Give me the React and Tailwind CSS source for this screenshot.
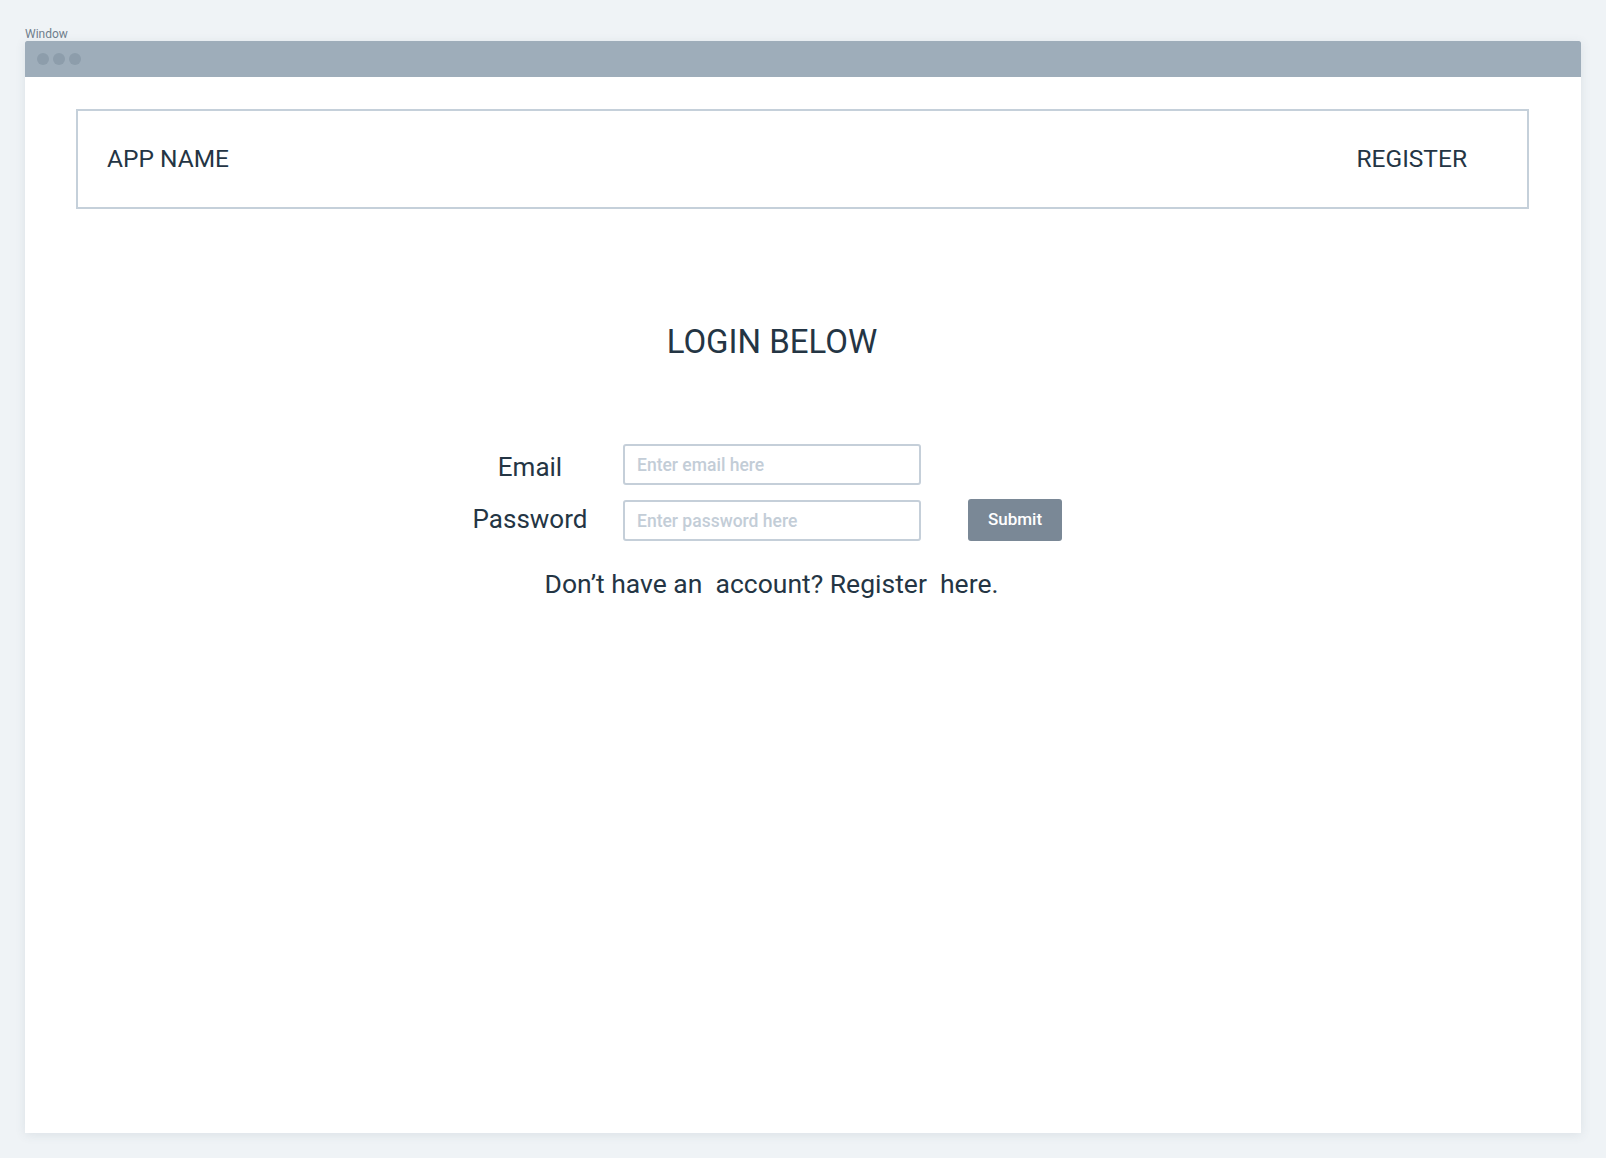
import { useState } from "react";

export default function App() {
  const [email, setEmail] = useState("");
  const [password, setPassword] = useState("");

  return (
    <div className="min-h-[1158px] w-full bg-[#eff3f6] pt-[26px] pl-[25px] pr-[25px] font-['Roboto',sans-serif] text-[#243544]">
      <div className="h-[15px] text-[12px] leading-[16px] text-[#6f7e8c]">Window</div>

      {/* WINDOW */}
      <div className="w-[1556px] h-[1092px] bg-white shadow-[0_2px_10px_rgba(60,80,100,0.10)] flex flex-col">
        <div className="h-[36px] bg-[#9eadba] rounded-t-[2px] flex items-center gap-[4px] pl-[12px]">
          <span className="w-[12px] h-[12px] rounded-full bg-[#8d9dab]" />
          <span className="w-[12px] h-[12px] rounded-full bg-[#8d9dab]" />
          <span className="w-[12px] h-[12px] rounded-full bg-[#8d9dab]" />
        </div>

        <div className="pt-[32px] pl-[51px] pr-[52px]">
          {/* NAVBAR */}
          <nav className="h-[100px] border-2 border-[#c5d0da] flex items-center justify-between pl-[29px] pr-[60px]">
            <span className="text-[24.5px] leading-none">APP NAME</span>
            <span className="text-[24.5px] leading-none">REGISTER</span>
          </nav>
        </div>

        {/* LOGIN */}
        <h1 className="mt-[116px] pr-[62px] text-center text-[33px] leading-[34px]">LOGIN BELOW</h1>

        <form className="mt-[85px] ml-[440px] flex items-end" onSubmit={(e) => e.preventDefault()}>
          <div className="flex flex-col gap-[15px]">
            <label className="flex items-center">
              <span className="w-[130px] pt-[4px] text-center text-[26px] leading-none">Email</span>
              <input
                value={email}
                onChange={(e) => setEmail(e.target.value)}
                placeholder="Enter email here"
                className="ml-[28px] w-[298px] h-[41px] rounded-[3px] border-2 border-[#c5cfd9] pl-[12px] text-[17.5px] font-medium outline-none placeholder:text-[#c3cdd7]"
              />
            </label>
            <label className="flex items-center">
              <span className="w-[130px] pb-[3px] text-center text-[26px] leading-none">Password</span>
              <input
                type="password"
                value={password}
                onChange={(e) => setPassword(e.target.value)}
                placeholder="Enter password here"
                className="ml-[28px] w-[298px] h-[41px] rounded-[3px] border-2 border-[#c5cfd9] pl-[12px] text-[17.5px] font-medium outline-none placeholder:text-[#c3cdd7]"
              />
            </label>
          </div>
          <button
            type="submit"
            className="ml-[47px] w-[94px] h-[42px] rounded-[3px] bg-[#7a8896] text-white text-[17px] font-medium"
          >
            Submit
          </button>
        </form>

        <p className="mt-[30px] pr-[63px] text-center text-[26.5px] leading-[26px] whitespace-pre">
          {"Don’t have an  account? Register  here."}
        </p>
      </div>
    </div>
  );
}
